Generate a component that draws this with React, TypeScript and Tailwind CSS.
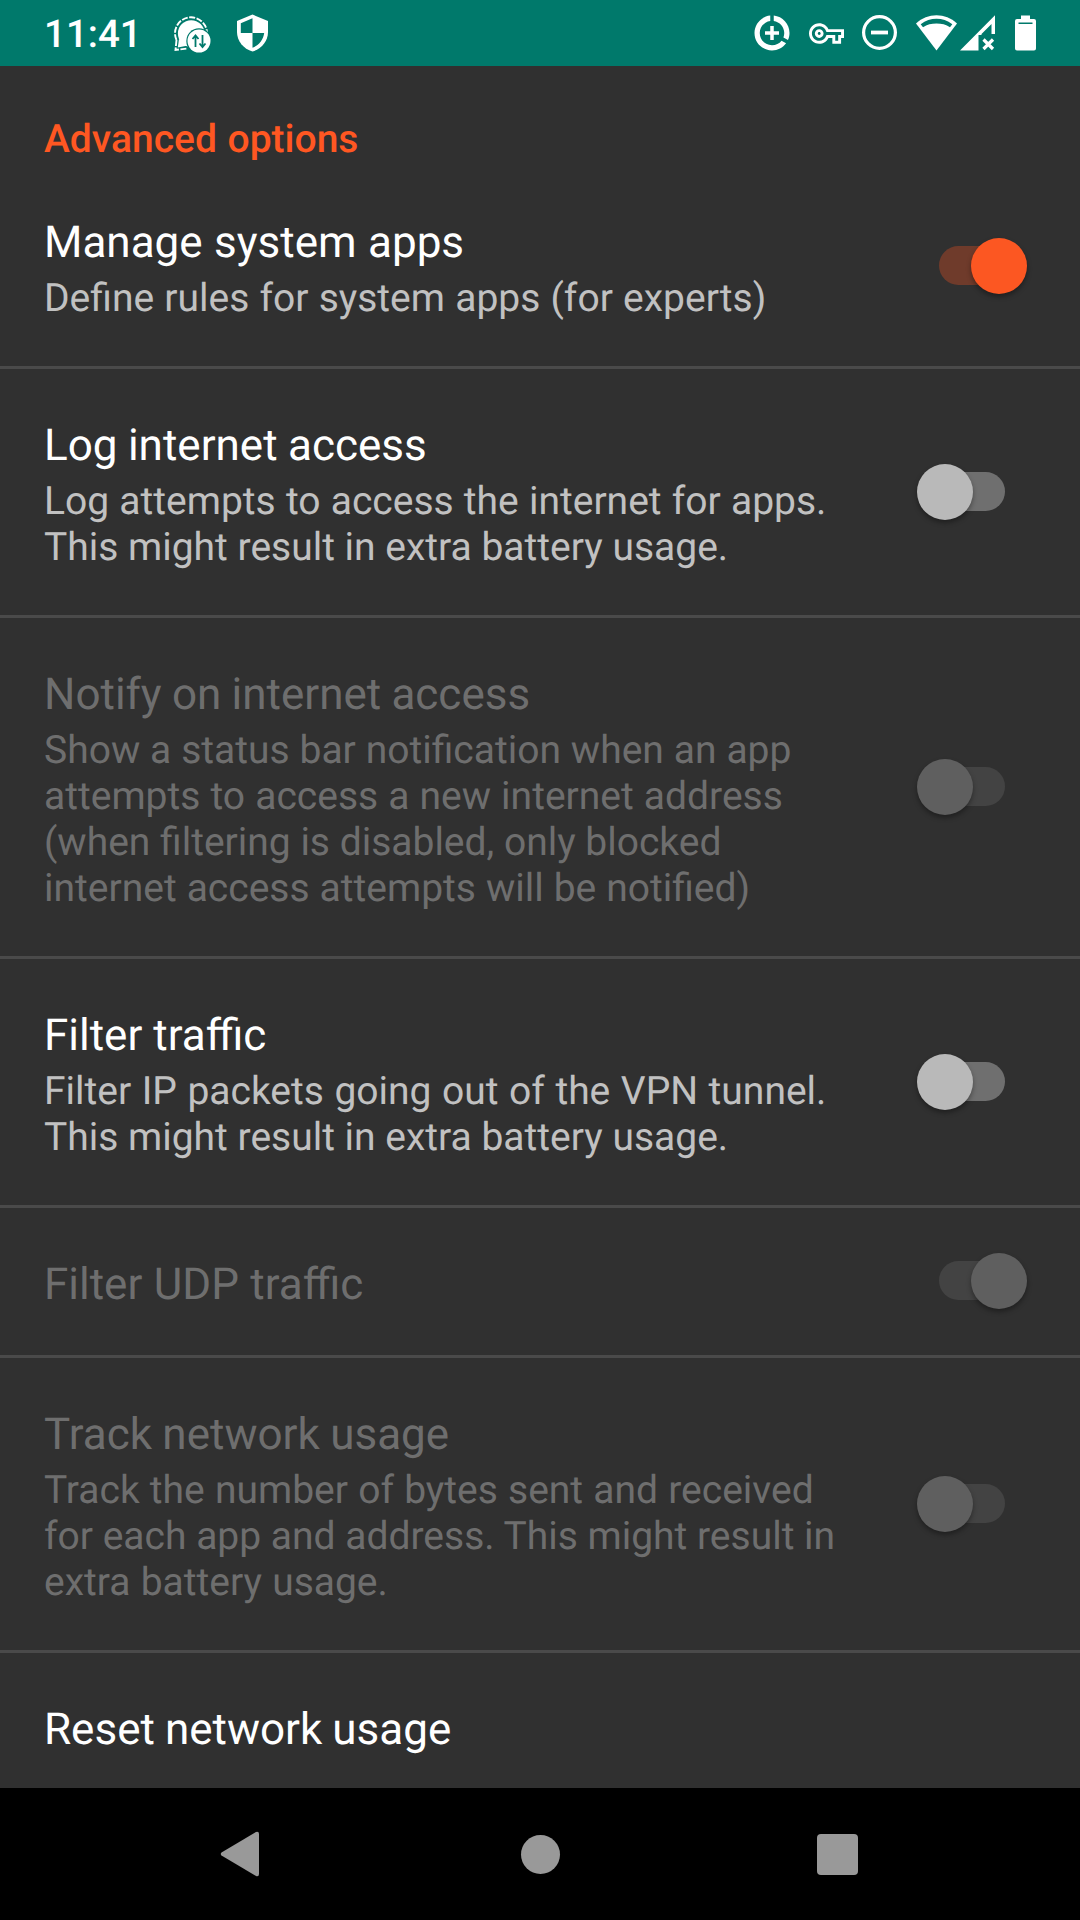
import React from "react";

type Line = { text: string; spacing?: string };

type Option = {
  title: string;
  titleSpacing?: string;
  summary?: Line[];
  on?: boolean;
  disabled?: boolean;
};

const options: Option[] = [
  {
    title: "Log internet access",
    titleSpacing: "[word-spacing:-0.5px]",
    summary: [
      { text: "Log attempts to access the internet for apps.", spacing: "[word-spacing:0.5px]" },
      { text: "This might result in extra battery usage." },
    ],
  },
  {
    title: "Notify on internet access",
    titleSpacing: "[word-spacing:-0.7px]",
    summary: [
      { text: "Show a status bar notification when an app", spacing: "[word-spacing:0.2px]" },
      { text: "attempts to access a new internet address", spacing: "[word-spacing:0.4px]" },
      { text: "(when filtering is disabled, only blocked" },
      { text: "internet access attempts will be notified)", spacing: "[word-spacing:0.3px]" },
    ],
    disabled: true,
  },
  {
    title: "Filter traffic",
    summary: [
      {
        text: "Filter IP packets going out of the VPN tunnel.",
        spacing: "[word-spacing:0.85px]",
      },
      { text: "This might result in extra battery usage." },
    ],
  },
  {
    title: "Filter UDP traffic",
    titleSpacing: "[word-spacing:0.5px]",
    on: true,
    disabled: true,
  },
  {
    title: "Track network usage",
    titleSpacing: "[word-spacing:-0.5px]",
    summary: [
      { text: "Track the number of bytes sent and received", spacing: "[word-spacing:0.5px]" },
      { text: "for each app and address. This might result in" },
      { text: "extra battery usage.", spacing: "[word-spacing:0.5px]" },
    ],
    disabled: true,
  },
];

function Toggle({
  on = false,
  disabled = false,
  className = "",
}: {
  on?: boolean;
  disabled?: boolean;
  className?: string;
}) {
  const track = disabled ? "bg-[#434343]" : on ? "bg-[#6f3b2b]" : "bg-[#6f6f6f]";
  const thumb = disabled ? "bg-[#5f5f5f]" : on ? "bg-[#fc5722]" : "bg-[#b9b9b9]";
  return (
    <div
      role="switch"
      aria-checked={on}
      className={`flex h-14 shrink-0 items-start ${on ? "mr-[53px]" : "mr-[75px]"} ${className}`}
    >
      {on ? <div className={`mt-2 h-[39px] w-[60px] rounded-l-full ${track}`} /> : null}
      <div
        className={`relative z-10 size-14 rounded-full shadow-[0_3px_5px_rgba(0,0,0,0.35)] ${thumb} ${
          on ? "-ml-7" : ""
        }`}
      />
      {on ? null : <div className={`-ml-7 mt-2 h-[39px] w-[60px] rounded-r-full ${track}`} />}
    </div>
  );
}

function Text({ option }: { option: Option }) {
  return (
    <div className="flex-1 pl-11">
      <div
        className={`whitespace-nowrap text-[44px] leading-[52px] ${
          option.disabled ? "text-[#6e6e6e]" : "text-white"
        } ${option.titleSpacing ?? ""}`}
      >
        {option.title}
      </div>
      {option.summary ? (
        <div
          className={`mt-[7px] whitespace-nowrap text-[39px] leading-[46px] ${
            option.disabled ? "text-[#6e6e6e]" : "text-[#c1c1c1]"
          }`}
        >
          {option.summary.map((line) => (
            <div key={line.text} className={line.spacing}>
              {line.text}
            </div>
          ))}
        </div>
      ) : null}
    </div>
  );
}

function Row({ option }: { option: Option }) {
  return (
    <div className="flex items-center border-t-[3px] border-[#4a4a4a]">
      <div className="flex-1 pb-[45px] pt-[50px]">
        <Text option={option} />
      </div>
      <Toggle
        on={option.on}
        disabled={option.disabled}
        className={option.summary ? "" : "mb-px"}
      />
    </div>
  );
}

function StatusBar() {
  return (
    <header className="flex h-[66px] items-center bg-[#00796b] pl-[44px] text-white">
      <div className="w-[130px] whitespace-nowrap pt-[3px] text-[38.5px] font-medium leading-[46px]">
        11:41
      </div>
      {/* messenger sync */}
      <svg width="37" height="38" viewBox="0 0 37 38" fill="none" className="mt-[2px]">
        <path
          d="M2.500 25A16 16 0 1 1 33 19M2.500 25L1.500 35L13 33.500"
          stroke="#fff"
          strokeWidth="1.900"
          strokeDasharray="6 1.500"
        />
        <circle cx="17.200" cy="18.500" r="13.300" fill="#fff" />
        <path d="M5 24L3.800 32.500L14 30.500Z" fill="#fff" />
        <circle cx="25" cy="26" r="12.700" fill="#00796b" />
        <circle cx="25" cy="26" r="11.500" fill="#fff" />
        <path
          d="M21.500 32V21M18.500 24l3-3.500 3 3.500M28.500 20v11.500M25.500 28.500l3 3.500 3-3.500"
          stroke="#00796b"
          strokeWidth="1.800"
        />
      </svg>
      {/* shield */}
      <svg className="ml-[26px]" width="31" height="38" viewBox="0 0 31 38">
        <path d="M15.500 0.500L31 7v11c0 9-6.500 17-15.500 19.500C6.500 35 0 27 0 18V7z" fill="#fff" />
        <path d="M15.500 4.200V19H27.200c-.9 6.800-5.400 12.500-11.700 14.700V19H3.800V9.200z" fill="#00796b" />
      </svg>
      {/* data saver */}
      <svg className="ml-[483px]" width="42" height="42" viewBox="0 0 24 24" fill="#fff">
        <path d="M11 8v3H8v2h3v3h2v-3h3v-2h-3V8h-2zm2-5.950v3.030c3.390.490 6 3.390 6 6.920 0 .900-.180 1.750-.480 2.540l2.600 1.530c.560-1.240.880-2.620.880-4.070 0-5.180-3.950-9.450-9-9.950zM12 19c-3.870 0-7-3.130-7-7 0-3.530 2.610-6.430 6-6.920V2.050c-5.060.490-9 4.760-9 9.950 0 5.520 4.470 10 9.990 10 3.310 0 6.240-1.610 8.060-4.090l-2.600-1.530C16.170 17.980 14.210 19 12 19z" />
      </svg>
      {/* vpn key */}
      <svg className="ml-[16px]" width="35" height="35" viewBox="0 0 24 24" fill="#fff">
        <path d="M22 19h-6v-4h-2.680c-1.140 2.420-3.600 4-6.320 4-3.860 0-7-3.140-7-7s3.140-7 7-7c2.720 0 5.170 1.580 6.320 4H24v6h-2v4zm-4-2h2v-4h2v-2H11.940l-.230-.670C11.010 8.340 9.110 7 7 7c-2.760 0-5 2.240-5 5s2.240 5 5 5c2.110 0 4.010-1.340 4.710-3.330l.230-.670H18v4zM7 15c-1.650 0-3-1.350-3-3s1.350-3 3-3 3 1.350 3 3-1.350 3-3 3zm0-4c-.550 0-1 .450-1 1s.450 1 1 1 1-.450 1-1-.450-1-1-1z" />
      </svg>
      {/* do not disturb */}
      <svg className="ml-[18px]" width="35" height="36" viewBox="0 0 35 36" fill="none" stroke="#fff">
        <circle cx="17.500" cy="17.500" r="15.900" strokeWidth="3.200" />
        <path d="M9 17.500H26" strokeWidth="3.800" />
      </svg>
      {/* wifi */}
      <svg className="ml-[19px]" width="41" height="36" viewBox="0 0 41 36">
        <path d="M0 8.500C6 3 13 0.300 20.500 0.300S35 3 41 8.500L20.500 35.500z" fill="#fff" />
        <path
          d="M4.700 9.200C9.500 5.500 15 3.700 20.500 3.700S31.500 5.500 36.300 9.200L34 12.200C30 9.400 25.500 8.500 20.500 8.500S11 9.400 7 12.200z"
          fill="#00796b"
        />
      </svg>
      {/* mobile signal without data */}
      <svg className="ml-[3px]" width="36" height="36" viewBox="0 0 36 36">
        <path d="M0 35.500L35 0.300V19H31.500V9L21.500 19V20H18.500V35.500z" fill="#fff" />
        <path d="M23.500 24.500L33 34M33 24.500L23.500 34" stroke="#fff" strokeWidth="3.200" fill="none" />
      </svg>
      {/* battery */}
      <svg className="ml-[19px]" width="21" height="36" viewBox="0 0 21 36">
        <path
          d="M6 0.500H15V4H19Q21 4 21 6V33.500Q21 35.500 19 35.500H2Q0 35.500 0 33.500V6Q0 4 2 4H6z"
          fill="#fff"
        />
        <path d="M3.500 7.500H17.500V9H3.500z" fill="#00796b" />
      </svg>
    </header>
  );
}

export default function App() {
  return (
    <div className="flex h-[1920px] w-[1080px] flex-col overflow-hidden bg-[#303030] font-['Roboto',sans-serif] [text-rendering:geometricPrecision]">
      <StatusBar />
      <main className="flex-1 overflow-hidden">
        <h1 className="h-[100px] pl-11 pt-[50px] text-[39px] font-medium leading-[46px] text-[#ff5722] [word-spacing:1px]">
          Advanced options
        </h1>
        <div className="flex h-[200px] items-center">
          <div className="flex-1 self-start pt-[50px]">
            <Text
              option={{
                title: "Manage system apps",
                titleSpacing: "[word-spacing:0.5px]",
                summary: [
                  {
                    text: "Define rules for system apps (for experts)",
                    spacing: "[word-spacing:0.5px]",
                  },
                ],
              }}
            />
          </div>
          <Toggle on />
        </div>
        {options.map((option) => (
          <Row key={option.title} option={option} />
        ))}
        <div className="border-t-[3px] border-[#4a4a4a] pt-[50px]">
          <Text option={{ title: "Reset network usage", titleSpacing: "[word-spacing:-0.9px]" }} />
        </div>
      </main>
      <nav className="flex h-[132px] items-center bg-black">
        <svg className="ml-[220px]" width="40" height="46" viewBox="0 0 40 46">
          <path d="M1.500 21.500L36 0.900Q39 0 39 3V43Q39 46 36 45L1.500 24.500Q0 23 1.500 21.500z" fill="#999" />
        </svg>
        <div className="ml-[261px] size-[39px] rounded-full bg-[#999]" />
        <div className="ml-[257px] size-[41px] rounded-[4px] bg-[#999]" />
      </nav>
    </div>
  );
}
